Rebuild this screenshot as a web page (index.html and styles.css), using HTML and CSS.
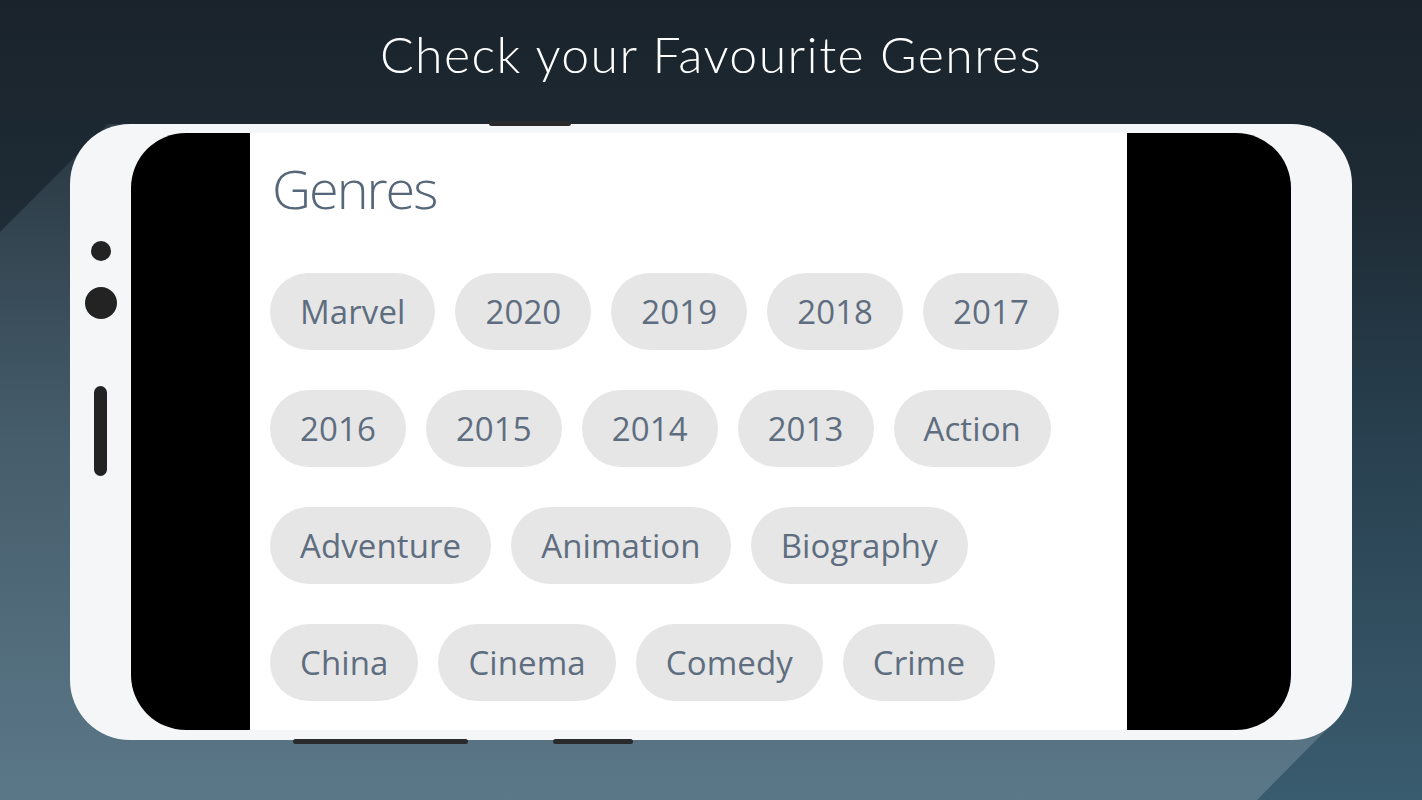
FILE: index.html
```html
<!DOCTYPE html>
<html lang="en">
<head>
<meta charset="utf-8">
<title>Check your Favourite Genres</title>
<link rel="stylesheet" href="styles.css">
</head>
<body>
<div class="stage">
  <div class="band"></div>
  <header class="headline"><h1>Check your Favourite Genres</h1></header>
  <div class="phone">
    <span class="bar bar-top"></span>
    <span class="bar bar-bottom-a"></span>
    <span class="bar bar-bottom-b"></span>
    <div class="bezel bezel-left">
      <span class="dot dot-small"></span>
      <span class="dot dot-large"></span>
      <span class="pill"></span>
    </div>
    <div class="screen">
      <div class="side side-left"></div>
      <main class="content">
        <h2 class="title">Genres</h2>
        <div class="rows">
          <div class="row">
            <span class="chip">Marvel</span>
            <span class="chip">2020</span>
            <span class="chip">2019</span>
            <span class="chip">2018</span>
            <span class="chip">2017</span>
          </div>
          <div class="row">
            <span class="chip">2016</span>
            <span class="chip">2015</span>
            <span class="chip">2014</span>
            <span class="chip">2013</span>
            <span class="chip">Action</span>
          </div>
          <div class="row">
            <span class="chip">Adventure</span>
            <span class="chip">Animation</span>
            <span class="chip">Biography</span>
          </div>
          <div class="row">
            <span class="chip">China</span>
            <span class="chip">Cinema</span>
            <span class="chip">Comedy</span>
            <span class="chip">Crime</span>
          </div>
        </div>
      </main>
      <div class="side side-right"></div>
    </div>
    <div class="bezel bezel-right"></div>
  </div>
</div>
</body>
</html>
```

FILE: styles.css
```css
html, body {
  margin: 0;
  padding: 0;
}

body {
  width: 1422px;
  height: 800px;
  overflow: hidden;
}

.stage {
  position: relative;
  width: 1422px;
  height: 800px;
  overflow: hidden;
  background: linear-gradient(180deg, #1a232b 0%, #1e2b35 25%, #28404f 55%, #3a5c6f 100%);
  font-family: "Open Sans", "Noto Sans", sans-serif;
}

.band {
  position: absolute;
  inset: 0;
  background: linear-gradient(180deg, #2c3c47 20%, #465d6b 55%, #5b7888 100%);
  clip-path: polygon(0 232px, 108px 124px, 1292px 126px, 1321px 134px, 1342px 155px, 1350px 184px, 1350px 680px, 1343px 709px, 1334px 722px, 1257px 800px, 0 800px);
}

.headline {
  position: relative;
  height: 124px;
  box-sizing: border-box;
  padding-top: 29px;
  text-align: center;
}

.headline h1 {
  margin: 0;
  font-family: "Lato", "Open Sans", sans-serif;
  font-weight: 300;
  font-size: 50px;
  line-height: 1;
  color: #ffffff;
  letter-spacing: 1.4px;
}

.phone {
  position: relative;
  margin-left: 70px;
  width: 1282px;
  height: 616px;
  box-sizing: border-box;
  padding: 9px 0 10px;
  background: #f4f6f8;
  border-radius: 60px;
  display: flex;
}

.bar {
  position: absolute;
  height: 5px;
  border-radius: 3px;
  background: #2a2a2c;
}

.bar-top {
  left: 419px;
  top: -3px;
  width: 82px;
}

.bar-bottom-a {
  left: 223px;
  bottom: -4px;
  width: 175px;
}

.bar-bottom-b {
  left: 483px;
  bottom: -4px;
  width: 80px;
}

.bezel {
  width: 61px;
  flex: none;
}

.bezel-left {
  display: flex;
  flex-direction: column;
  align-items: center;
  padding-top: 108px;
  box-sizing: border-box;
}

.dot {
  display: block;
  border-radius: 50%;
  background: #232323;
}

.dot-small {
  width: 20px;
  height: 20px;
}

.dot-large {
  width: 32px;
  height: 32px;
  margin-top: 26px;
}

.pill {
  display: block;
  width: 13px;
  height: 90px;
  margin-top: 67px;
  border-radius: 7px;
  background: #232323;
}

.screen {
  flex: 1;
  height: 597px;
  background: #000000;
  border-radius: 55px;
  overflow: hidden;
  display: flex;
}

.side-left {
  width: 119px;
  flex: none;
}

.side-right {
  width: 164px;
  flex: none;
}

.content {
  flex: 1;
  background: #ffffff;
  box-sizing: border-box;
  padding: 28px 20px 0;
  overflow: hidden;
}

.title {
  margin: 0;
  font-family: "Open Sans", sans-serif;
  font-weight: 300;
  font-size: 54px;
  line-height: 54px;
  color: #56677a;
  letter-spacing: -2px;
  padding-left: 2px;
}

.rows {
  margin-top: 58px;
  display: flex;
  flex-direction: column;
  gap: 40px;
}

.row {
  display: flex;
  gap: 20px;
}

.chip {
  height: 77px;
  line-height: 77px;
  padding: 0 30px;
  border-radius: 39px;
  background: #e6e6e6;
  color: #5e6e80;
  font-size: 33px;
  font-weight: 400;
  letter-spacing: 0.1px;
  white-space: nowrap;
}
```
